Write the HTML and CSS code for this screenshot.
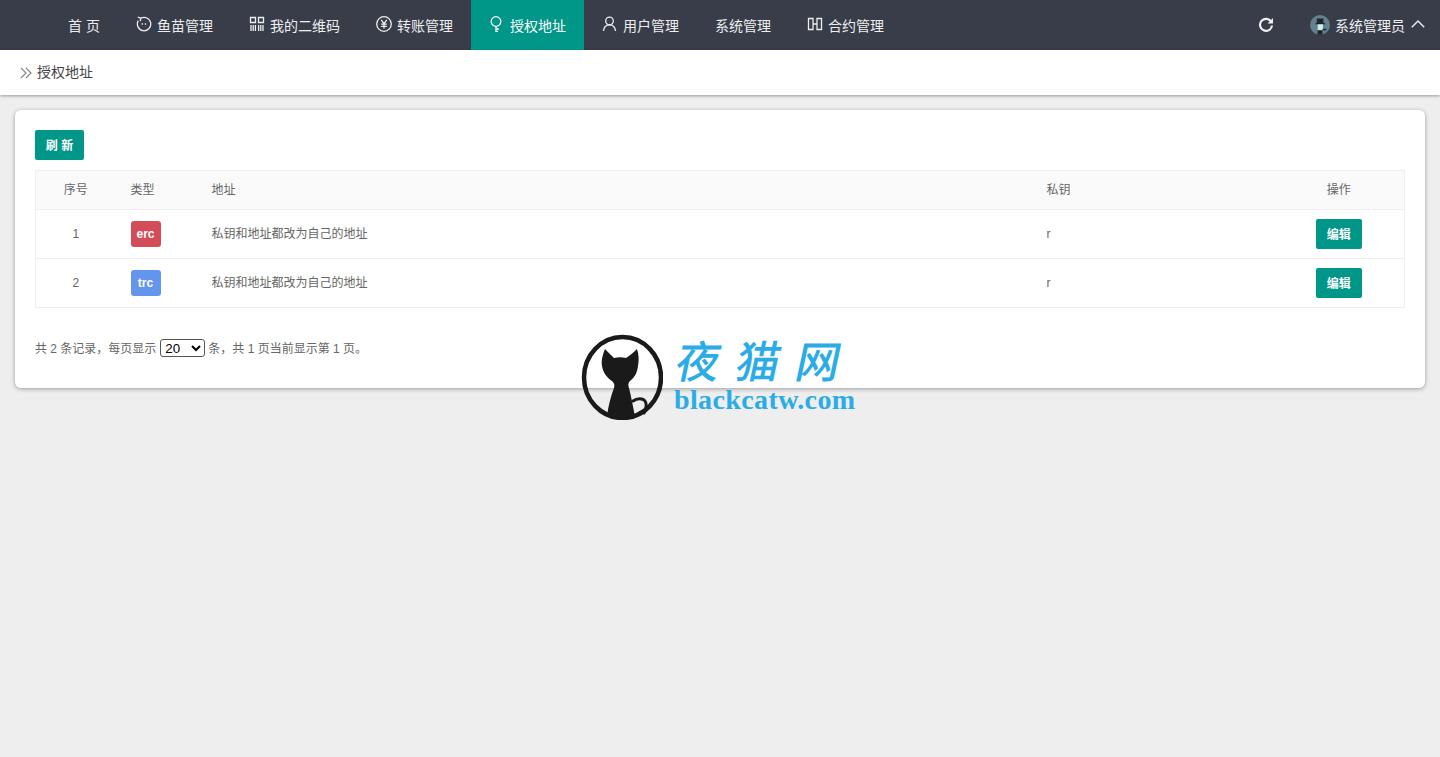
FILE: index.html
```html
<!DOCTYPE html>
<html lang="zh-CN">
<head>
<meta charset="utf-8">
<title>授权地址</title>
<link rel="stylesheet" href="styles.css">
</head>
<body>
<header class="topbar">
  <nav class="nav">
    <a class="nav-item">首 页</a>
    <a class="nav-item"><svg class="nav-icon" viewBox="0 0 16 16"><path d="M4.700 2.300A6.700 6.700 0 1 1 2.300 4.700M1.800 1.200l3.100.9-.7 3"/><path d="M6.300 7.300v1.400M9.500 7.300v1.400"/></svg>鱼苗管理</a>
    <a class="nav-item"><svg class="nav-icon" viewBox="0 0 16 16"><path d="M1.500 1.500h5v5h-5zM9.500 1.500h5v5h-5zM2 9v6M4.200 9v6M6.400 9v6M9.600 9v6M11.800 9v6M14 9v6"/></svg>我的二维码</a>
    <a class="nav-item"><svg class="nav-icon" viewBox="0 0 16 16"><circle cx="8" cy="8" r="7.300"/><path d="M5.200 3.800 8 7.600l2.800-3.800M8 7.600v5M5.200 8.200h5.600M5.200 10.300h5.600"/></svg>转账管理</a>
    <a class="nav-item is-active"><svg class="nav-icon" viewBox="0 0 16 16"><circle cx="7" cy="5.500" r="4.800"/><path d="M7 10.300V16M7 13h2.800M7 15.300h2"/></svg>授权地址</a>
    <a class="nav-item"><svg class="nav-icon" viewBox="0 0 16 16"><circle cx="7.500" cy="5" r="3.800"/><path d="M1.500 15c.3-3.600 2.600-6.200 6-6.200s5.700 2.600 6 6.200"/></svg>用户管理</a>
    <a class="nav-item">系统管理</a>
    <a class="nav-item"><svg class="nav-icon" viewBox="0 0 16 16"><path d="M1.500 2.500h4.500v11H1.500zM10 2.500h4.500v11H10zM6 8h4"/></svg>合约管理</a>
  </nav>
  <div class="top-right">
    <svg class="refresh" viewBox="0 0 16 16"><path d="M13.300 5A6 6 0 1 0 14 8.500"/><path class="solid" d="M15 1v5.400H9.600z"/></svg>
    <div class="user">
      <svg class="avatar" viewBox="0 0 20 20"><circle cx="10" cy="10" r="10" fill="#62808e"/><path d="M5.500 8h9.500v1.300H5.500z" fill="#20242b"/><path d="M6.800 3.500h6.600V8H6.800z" fill="#20242b"/><path d="M7.700 9.300h5.300v6H7.700z" fill="#c9efe6"/><path d="M7.500 15.300h5v4.500h-5z" fill="#20242b"/><path d="M12.500 13.800h4v1.500h-4z" fill="#20242b"/></svg>
      <span class="user-name">系统管理员</span>
      <svg class="chevron" viewBox="0 0 14 8"><path d="M.8 7.200 7 1l6.200 6.200"/></svg>
    </div>
  </div>
</header>

<div class="crumb">
  <svg class="crumb-icon" viewBox="0 0 12 12"><path d="M1 1l5 5-5 5M6 1l5 5-5 5"/></svg>
  <span class="crumb-text">授权地址</span>
</div>

<main class="card">
  <button class="btn btn-refresh">刷 新</button>
  <table class="grid">
    <colgroup>
      <col class="col-no"><col class="col-type"><col class="col-addr"><col class="col-key"><col class="col-op">
    </colgroup>
    <thead>
      <tr><th class="center">序号</th><th>类型</th><th>地址</th><th>私钥</th><th class="center">操作</th></tr>
    </thead>
    <tbody>
      <tr>
        <td class="center cell-latin">1</td>
        <td class="cell-box"><span class="tag tag-erc">erc</span></td>
        <td>私钥和地址都改为自己的地址</td>
        <td class="cell-latin">r</td>
        <td class="center cell-box"><button class="btn btn-edit">编辑</button></td>
      </tr>
      <tr>
        <td class="center cell-latin">2</td>
        <td class="cell-box"><span class="tag tag-trc">trc</span></td>
        <td>私钥和地址都改为自己的地址</td>
        <td class="cell-latin">r</td>
        <td class="center cell-box"><button class="btn btn-edit">编辑</button></td>
      </tr>
    </tbody>
  </table>
  <div class="pager">
    <span class="pager-text">共 2 条记录，每页显示</span>
    <select class="pager-select"><option>20</option></select>
    <span class="pager-text">条，共 1 页当前显示第 1 页。</span>
  </div>
</main>

<aside class="watermark">
  <svg class="wm-logo" viewBox="0 0 82 86">
    <ellipse cx="41.500" cy="43.500" rx="38.500" ry="40.500" stroke="#1a1a1a" stroke-width="4.500"/>
    <path fill="#1a1a1a" d="M24 15c3 3 7 7 9 9 4-1 8-1 12 0 3-2 8-6 11-9 2 6 2 12 1 17-1 7-3 11-8 15-2 2-2 4-1 7 2 8 4 18 6 29H26c1-11 4-21 7-29 1-3 0-5-2-7-6-4-9-9-10-15-1-6 1-12 3-17z"/>
    <path stroke="#1a1a1a" stroke-width="3" stroke-linecap="round" d="M52 67c4-3 10-3 12 0 2 3 1 8-1 12"/>
  </svg>
  <div class="wm-text">
    <div class="wm-cn"><span>夜</span><span>猫</span><span>网</span></div>
    <div class="wm-en">blackcatw.com</div>
  </div>
</aside>
</body>
</html>
```

FILE: styles.css
```css
* { box-sizing: border-box; }
html, body { height: 100%; }
body {
  margin: 0;
  min-height: 757px;
  overflow: hidden;
  position: relative;
  background: #eeeeee;
  color: #666;
  font-family: "Liberation Sans", "Noto Sans CJK SC", sans-serif;
  font-size: 12px;
}
svg { display: block; fill: none; stroke: currentColor; }

.topbar {
  display: flex;
  align-items: stretch;
  justify-content: space-between;
  height: 50px;
  background: #393d49;
  color: #f0f0f0;
}
.nav { display: flex; margin-left: 50px; }
.nav-item {
  display: flex;
  align-items: center;
  padding: 0 18px;
  font-size: 14px;
  color: #eceef0;
}
.nav-item.is-active { background: #009688; color: #fff; }
.nav-icon { width: 16px; height: 16px; margin-right: 5px; stroke-width: 1.300; margin-top: -2px; }

.top-right { display: flex; align-items: center; padding-right: 15px; }
.refresh { width: 16px; height: 16px; stroke-width: 2.200; margin-right: 36px; margin-top: -1px; color: #eef0f2; }
.refresh .solid { fill: currentColor; stroke: none; }
.user { display: flex; align-items: center; font-size: 14px; color: #eceef0; }
.avatar { width: 20px; height: 20px; stroke: none; margin-right: 5px; }
.user-name { margin-right: 6px; margin-top: -1px; }
.chevron { width: 14px; height: 8px; stroke-width: 1.400; margin-top: -2px; }

.crumb {
  display: flex;
  align-items: center;
  height: 45px;
  padding-left: 20px;
  background: #fff;
  box-shadow: 0 1px 3px rgba(0, 0, 0, .35);
  font-size: 14px;
  color: #444;
}
.crumb-icon { width: 12px; height: 12px; margin-right: 5px; color: #888; stroke-width: 1.200; }
.crumb-text { margin-bottom: 3px; }

.card {
  margin: 15px 15px 0;
  height: 278px;
  padding: 20px;
  background: #fff;
  border-radius: 6px;
  box-shadow: 0 1px 4px rgba(0, 0, 0, .35);
}
.btn {
  display: block;
  height: 30px;
  border: 0;
  border-radius: 2px;
  background: #009688;
  color: #fff;
  font-family: inherit;
  font-size: 12px;
  font-weight: 700;
  padding: 0 0 2px;
}
.btn-refresh { width: 49px; }
.btn-edit { width: 46px; margin: 0 auto; }

.grid {
  width: 1369px;
  margin-top: 10px;
  border-collapse: collapse;
  table-layout: fixed;
  border: 1px solid #eee;
  color: #666;
}
.col-no { width: 80px; }
.col-type { width: 81px; }
.col-addr { width: 835px; }
.col-key { width: 242px; }
.col-op { width: 131px; }
.grid th, .grid td {
  padding: 0 15px 3px;
  text-align: left;
  font-weight: 400;
  font-size: 12px;
  border-bottom: 1px solid #eee;
}
.grid th { height: 39px; background: #fafafa; }
.grid td { height: 49px; }
.grid td.cell-box { padding-bottom: 0; }
.grid td.cell-latin { padding-bottom: 1px; }
.grid .center { text-align: center; }
.tag {
  display: block;
  width: 30px;
  height: 26px;
  border-radius: 3px;
  color: #fff;
  font-size: 12px;
  font-weight: 700;
  line-height: 26px;
  text-align: center;
}
.tag-erc { background: #d24d57; }
.tag-trc { background: #6495ed; }

.pager {
  display: flex;
  align-items: center;
  gap: 3px;
  margin-top: 31px;
  height: 18px;
  color: #666;
}
.pager-text { margin-bottom: 2px; }
.pager-select {
  width: 45px;
  height: 18px;
  padding: 0;
  margin-left: 1px;
  font-family: "Liberation Sans", sans-serif;
  font-size: 13.330px;
  background: #fff;
  color: #000;
  border: 1px solid #555;
  border-radius: 3px;
}

.watermark {
  position: absolute;
  left: 581px;
  top: 334px;
  display: flex;
  gap: 11px;
}
.wm-logo { width: 82px; height: 86px; stroke: none; }
.wm-text { color: #2cace6; width: 190px; }
.wm-cn {
  display: flex;
  gap: 16px;
  height: 52px;
  padding-left: 3px;
  font-family: "Noto Sans CJK SC", sans-serif;
  font-size: 44px;
  font-weight: 500;
  line-height: 50px;
  transform: skewX(-12deg);
}
.wm-en {
  font-family: "Liberation Serif", serif;
  font-size: 28px;
  font-weight: 700;
  line-height: 28px;
  letter-spacing: .38px;
}
```
